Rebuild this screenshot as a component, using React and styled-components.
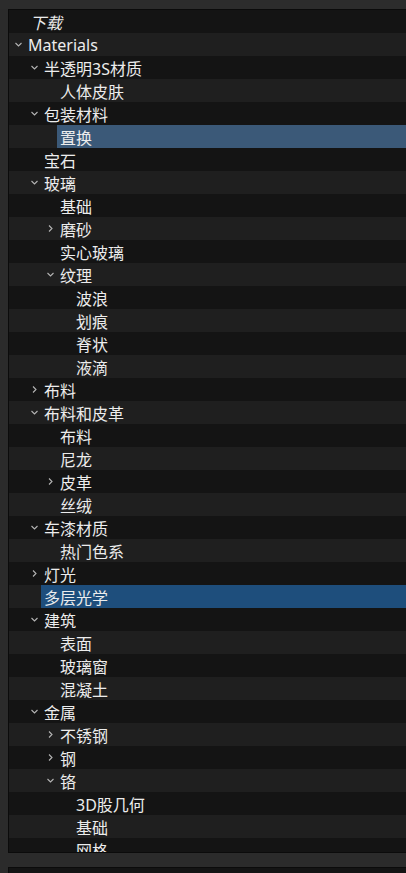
import React from 'react';
import styled, { createGlobalStyle } from 'styled-components';

const Global = createGlobalStyle`
  html, body {
    margin: 0;
    padding: 0;
    background: #2b2b2b;
  }
`

const Page = styled.div`
  width: 406px;
  height: 873px;
  overflow: hidden;
  background: #2b2b2b;
  font-family: "Noto Sans", "Noto Sans CJK SC", sans-serif;
`

const TopBar = styled.div`
  height: 9px;
  background: #2c2c2c;
`

const Panel = styled.div`
  margin-left: 8px;
  height: 842px;
  border: 1px solid #0b0b0b;
  border-right: none;
  background: #141414;
  overflow: hidden;
`

const Gap = styled.div`
  height: 14px;
`

const BottomPanel = styled.div`
  margin-left: 8px;
  height: 20px;
  border-top: 1px solid #0b0b0b;
  border-left: 1px solid #0b0b0b;
  background: #141414;
`

const Row = styled.div`
  display: flex;
  align-items: stretch;
  height: 23px;
  padding-left: ${p => p.$level * 16}px;
  background: ${p => (p.$odd ? '#1f1f1f' : '#141414')};
`

const Toggle = styled.div`
  width: 16px;
  flex: none;
  display: flex;
  align-items: center;
  padding-left: 6px;
  box-sizing: border-box;
  color: #b4b4b4;
`

const Label = styled.div`
  flex: 1;
  display: flex;
  align-items: center;
  padding-left: ${p => (p.$italic ? 5 : 3)}px;
  font-size: 16px;
  color: #ececec;
  font-style: ${p => (p.$italic ? 'italic' : 'normal')};
  background: ${p => p.$sel || 'transparent'};
  white-space: nowrap;
`

const Chevron = ({ open }) => (
  <svg width="7" height="7" viewBox="0 0 7 7" fill="none" stroke="currentColor" strokeWidth="1.1">
    {open ? <path d="M0.5 2 L3.5 5 L6.5 2" /> : <path d="M2 0.5 L5 3.5 L2 6.5" />}
  </svg>
)

// level, label, toggle ('o' open, 'c' closed, null leaf), selection colour
const items = [
  [0, '下载', null, null, true],
  [0, 'Materials', 'o'],
  [1, '半透明3S材质', 'o'],
  [2, '人体皮肤'],
  [1, '包装材料', 'o'],
  [2, '置换', null, '#3b5978'],
  [1, '宝石'],
  [1, '玻璃', 'o'],
  [2, '基础'],
  [2, '磨砂', 'c'],
  [2, '实心玻璃'],
  [2, '纹理', 'o'],
  [3, '波浪'],
  [3, '划痕'],
  [3, '脊状'],
  [3, '液滴'],
  [1, '布料', 'c'],
  [1, '布料和皮革', 'o'],
  [2, '布料'],
  [2, '尼龙'],
  [2, '皮革', 'c'],
  [2, '丝绒'],
  [1, '车漆材质', 'o'],
  [2, '热门色系'],
  [1, '灯光', 'c'],
  [1, '多层光学', null, '#1e4e7c'],
  [1, '建筑', 'o'],
  [2, '表面'],
  [2, '玻璃窗'],
  [2, '混凝土'],
  [1, '金属', 'o'],
  [2, '不锈钢', 'c'],
  [2, '钢', 'c'],
  [2, '铬', 'o'],
  [3, '3D股几何'],
  [3, '基础'],
  [3, '网格'],
]

export default function App() {
  return (
    <Page>
      <Global />
      <TopBar />
      <Panel>
        {items.map(([level, text, toggle, sel, italic], i) => (
          <Row key={i} $level={level} $odd={i % 2 === 1}>
            <Toggle>{toggle && <Chevron open={toggle === 'o'} />}</Toggle>
            <Label $sel={sel} $italic={italic}>{text}</Label>
          </Row>
        ))}
      </Panel>
      <Gap />
      <BottomPanel />
    </Page>
  )
}
